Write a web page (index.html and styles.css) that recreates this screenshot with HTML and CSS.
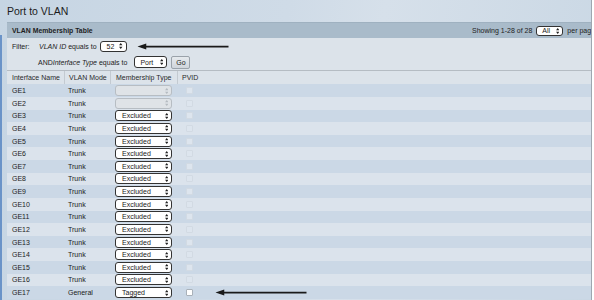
FILE: index.html
```html
<!DOCTYPE html>
<html>
<head>
<meta charset="utf-8">
<link rel="stylesheet" href="styles.css">
</head>
<body>
<div class="page">
  <div class="head"><h1 class="title">Port to VLAN</h1></div>
  <div class="body">
    <div class="panel">
      <div class="bar">
        <span class="bar-title">VLAN Membership Table</span>
        <span class="bar-right">Showing 1-28 of 28 <span class="sel sel-all">All<svg class="arr" viewBox="0 0 4 7"><path d="M2 0L4 2.6H0Z M2 7L4 4.4H0Z"/></svg></span> per page</span>
      </div>
      <div class="filter">
        <div class="frow f1">
          <span class="lbl">Filter:</span>
          <span><i>VLAN ID</i> equals to</span>
          <span class="sel sel-52">52<svg class="arr" viewBox="0 0 4 7"><path d="M2 0L4 2.6H0Z M2 7L4 4.4H0Z"/></svg></span>
          <span class="pointer p1"><svg viewBox="0 0 104 8"><path d="M0 4L10 0.5V3H104V5H10V7.5Z"/></svg></span>
        </div>
        <div class="frow f2">
          <span>AND<i>Interface Type</i> equals to</span>
          <span class="sel sel-port">Port<svg class="arr" viewBox="0 0 4 7"><path d="M2 0L4 2.6H0Z M2 7L4 4.4H0Z"/></svg></span>
          <span class="go">Go</span>
        </div>
      </div>
      <div class="grid">
        <div class="row hdr"><span>Interface Name</span><span>VLAN Mode</span><span>Membership Type</span><span>PVID</span></div>
        <div class="row"><span>GE1</span><span>Trunk</span><span><span class="sel sel-m dis"><svg class="arr" viewBox="0 0 4 7"><path d="M2 0L4 2.6H0Z M2 7L4 4.4H0Z"/></svg></span></span><span><span class="cb"></span></span></div>
        <div class="row"><span>GE2</span><span>Trunk</span><span><span class="sel sel-m dis"><svg class="arr" viewBox="0 0 4 7"><path d="M2 0L4 2.6H0Z M2 7L4 4.4H0Z"/></svg></span></span><span><span class="cb"></span></span></div>
        <div class="row"><span>GE3</span><span>Trunk</span><span><span class="sel sel-m">Excluded<svg class="arr" viewBox="0 0 4 7"><path d="M2 0L4 2.6H0Z M2 7L4 4.4H0Z"/></svg></span></span><span><span class="cb"></span></span></div>
        <div class="row"><span>GE4</span><span>Trunk</span><span><span class="sel sel-m">Excluded<svg class="arr" viewBox="0 0 4 7"><path d="M2 0L4 2.6H0Z M2 7L4 4.4H0Z"/></svg></span></span><span><span class="cb"></span></span></div>
        <div class="row"><span>GE5</span><span>Trunk</span><span><span class="sel sel-m">Excluded<svg class="arr" viewBox="0 0 4 7"><path d="M2 0L4 2.6H0Z M2 7L4 4.4H0Z"/></svg></span></span><span><span class="cb"></span></span></div>
        <div class="row"><span>GE6</span><span>Trunk</span><span><span class="sel sel-m">Excluded<svg class="arr" viewBox="0 0 4 7"><path d="M2 0L4 2.6H0Z M2 7L4 4.4H0Z"/></svg></span></span><span><span class="cb"></span></span></div>
        <div class="row"><span>GE7</span><span>Trunk</span><span><span class="sel sel-m">Excluded<svg class="arr" viewBox="0 0 4 7"><path d="M2 0L4 2.6H0Z M2 7L4 4.4H0Z"/></svg></span></span><span><span class="cb"></span></span></div>
        <div class="row"><span>GE8</span><span>Trunk</span><span><span class="sel sel-m">Excluded<svg class="arr" viewBox="0 0 4 7"><path d="M2 0L4 2.6H0Z M2 7L4 4.4H0Z"/></svg></span></span><span><span class="cb"></span></span></div>
        <div class="row"><span>GE9</span><span>Trunk</span><span><span class="sel sel-m">Excluded<svg class="arr" viewBox="0 0 4 7"><path d="M2 0L4 2.6H0Z M2 7L4 4.4H0Z"/></svg></span></span><span><span class="cb"></span></span></div>
        <div class="row"><span>GE10</span><span>Trunk</span><span><span class="sel sel-m">Excluded<svg class="arr" viewBox="0 0 4 7"><path d="M2 0L4 2.6H0Z M2 7L4 4.4H0Z"/></svg></span></span><span><span class="cb"></span></span></div>
        <div class="row"><span>GE11</span><span>Trunk</span><span><span class="sel sel-m">Excluded<svg class="arr" viewBox="0 0 4 7"><path d="M2 0L4 2.6H0Z M2 7L4 4.4H0Z"/></svg></span></span><span><span class="cb"></span></span></div>
        <div class="row"><span>GE12</span><span>Trunk</span><span><span class="sel sel-m">Excluded<svg class="arr" viewBox="0 0 4 7"><path d="M2 0L4 2.6H0Z M2 7L4 4.4H0Z"/></svg></span></span><span><span class="cb"></span></span></div>
        <div class="row"><span>GE13</span><span>Trunk</span><span><span class="sel sel-m">Excluded<svg class="arr" viewBox="0 0 4 7"><path d="M2 0L4 2.6H0Z M2 7L4 4.4H0Z"/></svg></span></span><span><span class="cb"></span></span></div>
        <div class="row"><span>GE14</span><span>Trunk</span><span><span class="sel sel-m">Excluded<svg class="arr" viewBox="0 0 4 7"><path d="M2 0L4 2.6H0Z M2 7L4 4.4H0Z"/></svg></span></span><span><span class="cb"></span></span></div>
        <div class="row"><span>GE15</span><span>Trunk</span><span><span class="sel sel-m">Excluded<svg class="arr" viewBox="0 0 4 7"><path d="M2 0L4 2.6H0Z M2 7L4 4.4H0Z"/></svg></span></span><span><span class="cb"></span></span></div>
        <div class="row"><span>GE16</span><span>Trunk</span><span><span class="sel sel-m">Excluded<svg class="arr" viewBox="0 0 4 7"><path d="M2 0L4 2.6H0Z M2 7L4 4.4H0Z"/></svg></span></span><span><span class="cb"></span></span></div>
        <div class="row"><span>GE17</span><span>General</span><span><span class="sel sel-m">Tagged<svg class="arr" viewBox="0 0 4 7"><path d="M2 0L4 2.6H0Z M2 7L4 4.4H0Z"/></svg></span></span><span class="pv"><span class="cb on"></span><span class="pointer p2"><svg viewBox="0 0 104 8"><path d="M0 4L10 0.5V3H104V5H10V7.5Z"/></svg></span></span></div>
      </div>
    </div>
  </div>
</div>
</body>
</html>
```

FILE: styles.css
```css
* { box-sizing: border-box; }
html, body { margin: 0; padding: 0; background: #ffffff; }
body {
  width: 594px;
  height: 300px;
  overflow: hidden;
  font-family: "Liberation Sans", Arial, sans-serif;
  color: #222;
}
.page {
  width: 592px;
  height: 300px;
  border-right: 1px solid #9ea7b0;
  background: linear-gradient(100deg, #c6d5e3 0%, #cfdbe7 45%, #d6e0ea 60%, #c9d7e4 100%);
}
.head {
  height: 22px;
  display: flex;
  align-items: center;
  padding-left: 7px;
}
.title {
  margin: 0;
  font-weight: normal;
  font-size: 10.5px;
  color: #1c1c1c;
  line-height: 1;
  padding-top: 1px;
}
.body {
  height: 278px;
  padding-left: 7px;
  position: relative;
}
.body::before {
  content: "";
  position: absolute;
  left: 0;
  top: 13px;
  bottom: 0;
  width: 2px;
  background: #6a93c8;
}
.panel {
  width: 584px;
}
.bar {
  height: 16px;
  background: #a9bbca;
  border-top: 1px solid #9fb1c0;
  display: flex;
  align-items: center;
  justify-content: space-between;
  padding-left: 5px;
  font-size: 7px;
  white-space: nowrap;
  overflow: hidden;
}
.bar-title {
  font-weight: bold;
  font-size: 6.9px;
  color: #1e1e1e;
}
.bar-right {
  display: flex;
  align-items: center;
  gap: 4px;
  margin-right: -4px;
  color: #222;
}
.filter {
  background: #dce3ea;
  height: 33px;
  border-bottom: 1px solid #b5bcc3;
  font-size: 7px;
}
.frow {
  display: flex;
  align-items: center;
  white-space: nowrap;
}
.f1 { height: 16px; padding-left: 5px; }
.f1 .lbl { width: 27px; }
.f1 .sel-52 { margin-left: 3px; }
.f2 { height: 16px; padding-left: 31px; }
.f2 .sel-port { margin-left: 7px; }
i { font-style: italic; }

.sel {
  display: inline-flex;
  align-items: center;
  justify-content: space-between;
  height: 11px;
  border: 1px solid #333;
  border-radius: 3px;
  background: #fff;
  font-size: 7px;
  padding: 0 3px 0 6px;
  color: #1a1a1a;
}
.arr { width: 3.5px; height: 6px; fill: #222; flex: none; }
.sel-all { width: 27px; height: 10px; padding-left: 5px; }
.sel-52 { width: 27px; padding-left: 6px; }
.sel-port { width: 33px; height: 12px; padding-left: 5px; }
.go {
  margin-left: 4px;
  width: 19px;
  height: 13px;
  border: 1px solid #9aa2aa;
  border-radius: 2px;
  background: linear-gradient(#e6eaee, #cfd5db);
  display: inline-flex;
  align-items: center;
  justify-content: center;
  font-size: 7px;
}
.pointer { display: inline-flex; }
.pointer svg { fill: #1a1a1a; display: block; }
.p1 { margin-left: 5px; }
.p1 svg { width: 102px; height: 7px; }

.grid { font-size: 7px; }
.row {
  display: grid;
  grid-template-columns: 57px 46px 67px 1fr;
  height: 12.625px;
  align-items: center;
  background: #cbd8e6;
  white-space: nowrap;
}
.row:nth-child(odd) { background: #dbe3ec; }
.row > span { padding-left: 5px; display: flex; align-items: center; height: 100%; }
.row > span:nth-child(2) { padding-left: 4px; }
.row > span:nth-child(3) { padding-left: 5px; }
.row > span:nth-child(4) { padding-left: 9px; }
.row.hdr {
  height: 13.3px;
  background: #dce3ea;
  color: #2a2a2a;
}
.row.hdr > span + span { border-left: 1px solid #c3cad1; }
.row.hdr > span:nth-child(4) { padding-left: 4px; }
.sel-m { width: 57px; }
.sel.dis {
  background: #dfe3e7;
  border-color: #b7bdc3;
  justify-content: flex-end;
}
.sel.dis .arr { fill: #b5bbc1; }
.cb {
  width: 7px;
  height: 7px;
  background: #dde5ee;
  border: 1px solid #d2dae3;
  border-radius: 1px;
}
.cb.on { background: #fff; border-color: #a9b1b9; }
.pv { position: relative; }
.p2 { position: absolute; left: 33px; top: 3px; }
.p2 svg { width: 102px; height: 7px; }
```
